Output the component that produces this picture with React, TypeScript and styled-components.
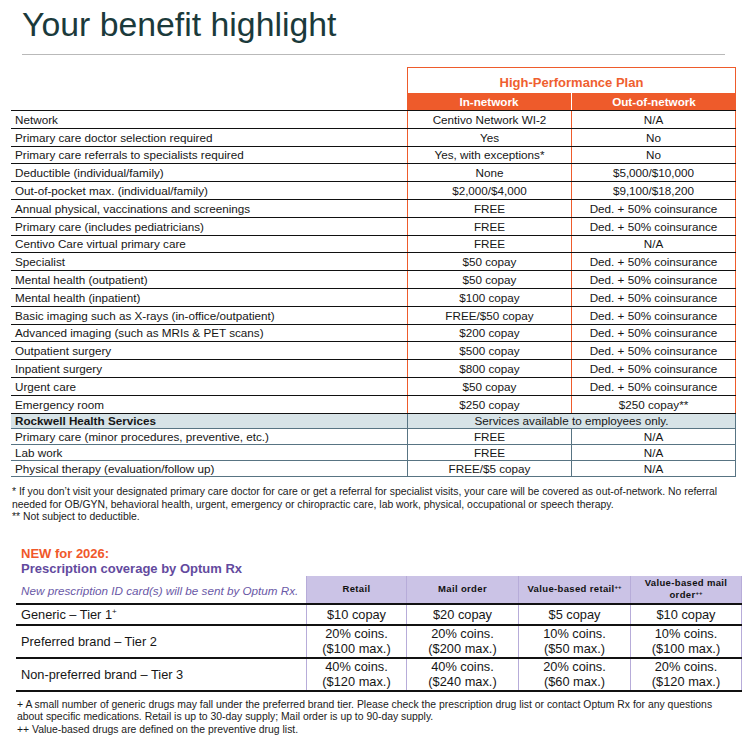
import React from "react";
import styled, { createGlobalStyle } from "styled-components";

const GlobalStyle = createGlobalStyle`
  html, body { margin: 0; padding: 0; background: #ffffff; }
  body { font-family: "Liberation Sans", Arial, sans-serif; }
  sup { line-height: 0; }
`;

const ORANGE = "#ee5b2b";
const SLATE = "#587483";
const LAV = "#b7acd9";

const Page = styled.div`
  width: 755px;
  min-height: 745px;
  background: #fff;
  color: #161616;
  font-family: "Liberation Sans", Arial, sans-serif;
`;

const Title = styled.h1`
  margin: 0;
  padding: 4px 0 0 22px;
  font-size: 33.8px;
  line-height: 40px;
  font-weight: 400;
  color: #1b3a3b;
`;

const Rule = styled.div`
  margin: 10px 0 0 22px;
  width: 703px;
  height: 1px;
  background: #b9b9b9;
`;

const PlanTable = styled.div`
  margin: 12px 0 0 11px;
  width: 725px;
  font-size: 11.7px;
`;

const Grid = styled.div`
  display: grid;
  grid-template-columns: 396px 164px 165px;
`;

const PlanTitle = styled.div`
  grid-column: 2 / span 2;
  height: 26px;
  box-sizing: border-box;
  border: 1px solid ${ORANGE};
  border-bottom: none;
  display: flex;
  align-items: center;
  justify-content: center;
  color: #ef5f30;
  font-weight: 700;
  font-size: 13px;
  padding-top: 4px;
`;

const HeadCell = styled.div<{ $col: number; $divider?: boolean }>`
  grid-column: ${(p) => p.$col};
  height: 17px;
  background: ${ORANGE};
  color: #fff;
  font-weight: 700;
  display: flex;
  align-items: center;
  justify-content: center;
  box-sizing: border-box;
  border-left: ${(p) => (p.$divider ? "1px solid #fff" : "none")};
`;

const Row = styled.div<{ $line: string; $h: number; $shade?: boolean; $last?: boolean }>`
  display: grid;
  grid-template-columns: 396px 164px 165px;
  height: ${(p) => p.$h}px;
  box-sizing: border-box;
  border-top: 1px solid ${(p) => p.$line};
  border-bottom: ${(p) => (p.$last ? `1px solid ${SLATE}` : "none")};
  background: ${(p) => (p.$shade ? "#d7e3e7" : "transparent")};
`;

const Label = styled.div<{ $bold?: boolean }>`
  display: flex;
  align-items: center;
  padding-left: 4px;
  white-space: nowrap;
  font-weight: ${(p) => (p.$bold ? 700 : 400)};
`;

const Value = styled.div<{ $edge: string; $last?: boolean; $span?: boolean }>`
  display: flex;
  align-items: center;
  justify-content: center;
  white-space: nowrap;
  border-left: 1px solid ${(p) => p.$edge};
  border-right: ${(p) => (p.$last ? `1px solid ${p.$edge}` : "none")};
  grid-column: ${(p) => (p.$span ? "2 / span 2" : "auto")};
`;

const Notes = styled.div<{ $top: number; $left: number }>`
  margin-top: ${(p) => p.$top}px;
  padding-left: ${(p) => p.$left}px;
  font-size: 10.4px;
  line-height: 12.5px;
  color: #1a1a1a;
`;

const NoteLine = styled.div`
  white-space: nowrap;
`;

const RxHeading = styled.div`
  margin: 22px 0 0 21px;
`;

const NewLabel = styled.div`
  color: #f0582a;
  font-weight: 700;
  font-size: 13px;
  line-height: 15px;
`;

const RxTitle = styled.div`
  color: #634a9e;
  font-weight: 700;
  font-size: 13px;
  line-height: 14px;
  padding-top: 1px;
`;

const RxTable = styled.div`
  margin-left: 16px;
  width: 726px;
`;

const RxGrid = styled.div<{ $h: number; $top?: number; $bottom?: number }>`
  display: grid;
  grid-template-columns: 290px 100px 112px 112px 112px;
  height: ${(p) => p.$h}px;
  box-sizing: border-box;
  border-top: ${(p) => (p.$top ? `${p.$top}px solid #111` : "none")};
  border-bottom: ${(p) => (p.$bottom ? `${p.$bottom}px solid #111` : "none")};
`;

const RxNote = styled.div`
  display: flex;
  align-items: flex-end;
  padding: 0 0 5px 5px;
  font-style: italic;
  font-size: 11.7px;
  line-height: 14px;
  color: #6a58a6;
  white-space: nowrap;
`;

const RxHead = styled.div<{ $last?: boolean }>`
  background: #cbc3e6;
  border-left: 1px solid ${LAV};
  border-right: ${(p) => (p.$last ? `1px solid ${LAV}` : "none")};
  display: flex;
  align-items: center;
  justify-content: center;
  text-align: center;
  font-weight: 700;
  font-size: 9.5px;
  letter-spacing: 0.35px;
  line-height: 12px;
  color: #111;
  sup { font-size: 6px; vertical-align: 3px; letter-spacing: 0; }
`;

const HeadText = styled.span`
  display: block;
`;

const RxLabel = styled.div`
  display: flex;
  align-items: center;
  padding-left: 5px;
  font-size: 12.8px;
  white-space: nowrap;
  sup { font-size: 8px; vertical-align: 5px; }
`;

const RxCell = styled.div<{ $last?: boolean }>`
  border-left: 1px solid ${LAV};
  border-right: ${(p) => (p.$last ? `1px solid ${LAV}` : "none")};
  display: flex;
  align-items: center;
  justify-content: center;
  text-align: center;
  font-size: 12.8px;
  line-height: 15px;
`;

const DED = "Ded. + 50% coinsurance";

const mainRows: [string, string, string][] = [
  ["Network", "Centivo Network WI-2", "N/A"],
  ["Primary care doctor selection required", "Yes", "No"],
  ["Primary care referrals to specialists required", "Yes, with exceptions*", "No"],
  ["Deductible (individual/family)", "None", "$5,000/$10,000"],
  ["Out-of-pocket max. (individual/family)", "$2,000/$4,000", "$9,100/$18,200"],
  ["Annual physical, vaccinations and screenings", "FREE", DED],
  ["Primary care (includes pediatricians)", "FREE", DED],
  ["Centivo Care virtual primary care", "FREE", "N/A"],
  ["Specialist", "$50 copay", DED],
  ["Mental health (outpatient)", "$50 copay", DED],
  ["Mental health (inpatient)", "$100 copay", DED],
  ["Basic imaging such as X-rays (in-office/outpatient)", "FREE/$50 copay", DED],
  ["Advanced imaging (such as MRIs & PET scans)", "$200 copay", DED],
  ["Outpatient surgery", "$500 copay", DED],
  ["Inpatient surgery", "$800 copay", DED],
  ["Urgent care", "$50 copay", DED],
  ["Emergency room", "$250 copay", "$250 copay**"],
];

const rockwellRows: [string, string, string][] = [
  ["Primary care (minor procedures, preventive, etc.)", "FREE", "N/A"],
  ["Lab work", "FREE", "N/A"],
  ["Physical therapy (evaluation/follow up)", "FREE/$5 copay", "N/A"],
];

type RxRow = { label: React.ReactNode; h: number; cells: React.ReactNode[] };

const rxRows: RxRow[] = [
  {
    label: (
      <span>
        Generic – Tier 1<sup>+</sup>
      </span>
    ),
    h: 21,
    cells: ["$10 copay", "$20 copay", "$5 copay", "$10 copay"],
  },
  {
    label: "Preferred brand – Tier 2",
    h: 33,
    cells: [
      <span>20% coins.<br />($100 max.)</span>,
      <span>20% coins.<br />($200 max.)</span>,
      <span>10% coins.<br />($50 max.)</span>,
      <span>10% coins.<br />($100 max.)</span>,
    ],
  },
  {
    label: "Non-preferred brand – Tier 3",
    h: 33,
    cells: [
      <span>40% coins.<br />($120 max.)</span>,
      <span>40% coins.<br />($240 max.)</span>,
      <span>20% coins.<br />($60 max.)</span>,
      <span>20% coins.<br />($120 max.)</span>,
    ],
  },
];

export default function App() {
  return (
    <Page>
      <GlobalStyle />
      <Title>Your benefit highlight</Title>
      <Rule />

      <PlanTable>
        <Grid>
          <PlanTitle>High-Performance Plan</PlanTitle>
          <HeadCell $col={2}>In-network</HeadCell>
          <HeadCell $col={3} $divider>
            Out-of-network
          </HeadCell>
        </Grid>
        {mainRows.map(([l, a, b]) => (
          <Row key={l} $line="#111" $h={17.8}>
            <Label>{l}</Label>
            <Value $edge={ORANGE}>{a}</Value>
            <Value $edge={ORANGE} $last>
              {b}
            </Value>
          </Row>
        ))}
        <Row $line="#111" $h={15.6} $shade>
          <Label $bold>Rockwell Health Services</Label>
          <Value $edge={SLATE} $last $span>
            Services available to employees only.
          </Value>
        </Row>
        {rockwellRows.map(([l, a, b], i) => (
          <Row key={l} $line={SLATE} $h={i === rockwellRows.length - 1 ? 17 : 16} $last={i === rockwellRows.length - 1}>
            <Label>{l}</Label>
            <Value $edge={SLATE}>{a}</Value>
            <Value $edge={SLATE} $last>
              {b}
            </Value>
          </Row>
        ))}
      </PlanTable>

      <Notes $top={9} $left={12}>
        <NoteLine>
          * If you don’t visit your designated primary care doctor for care or get a referral for specialist visits, your care will be covered as out-of-network. No referral
        </NoteLine>
        <NoteLine>
          needed for OB/GYN, behavioral health, urgent, emergency or chiropractic care, lab work, physical, occupational or speech therapy.
        </NoteLine>
        <NoteLine>** Not subject to deductible.</NoteLine>
      </Notes>

      <RxHeading>
        <NewLabel>NEW for 2026:</NewLabel>
        <RxTitle>Prescription coverage by Optum Rx</RxTitle>
      </RxHeading>

      <RxTable>
        <RxGrid $h={27}>
          <RxNote>New prescription ID card(s) will be sent by Optum Rx.</RxNote>
          <RxHead>
            <HeadText>Retail</HeadText>
          </RxHead>
          <RxHead>
            <HeadText>Mail order</HeadText>
          </RxHead>
          <RxHead>
            <HeadText>
              Value-based retail<sup>++</sup>
            </HeadText>
          </RxHead>
          <RxHead $last>
            <HeadText>
              Value-based mail
              <br />
              order<sup>++</sup>
            </HeadText>
          </RxHead>
        </RxGrid>
        {rxRows.map((r, i) => (
          <RxGrid key={i} $h={r.h + (i === rxRows.length - 1 ? 2 : 0)} $top={2} $bottom={i === rxRows.length - 1 ? 2 : 0}>
            <RxLabel>{r.label}</RxLabel>
            {r.cells.map((c, j) => (
              <RxCell key={j} $last={j === r.cells.length - 1}>
                {c}
              </RxCell>
            ))}
          </RxGrid>
        ))}
      </RxTable>

      <Notes $top={7} $left={17}>
        <NoteLine>
          + A small number of generic drugs may fall under the preferred brand tier. Please check the prescription drug list or contact Optum Rx for any questions
        </NoteLine>
        <NoteLine>
          about specific medications. Retail is up to 30-day supply; Mail order is up to 90-day supply.
        </NoteLine>
        <NoteLine>++ Value-based drugs are defined on the preventive drug list.</NoteLine>
      </Notes>
    </Page>
  );
}
